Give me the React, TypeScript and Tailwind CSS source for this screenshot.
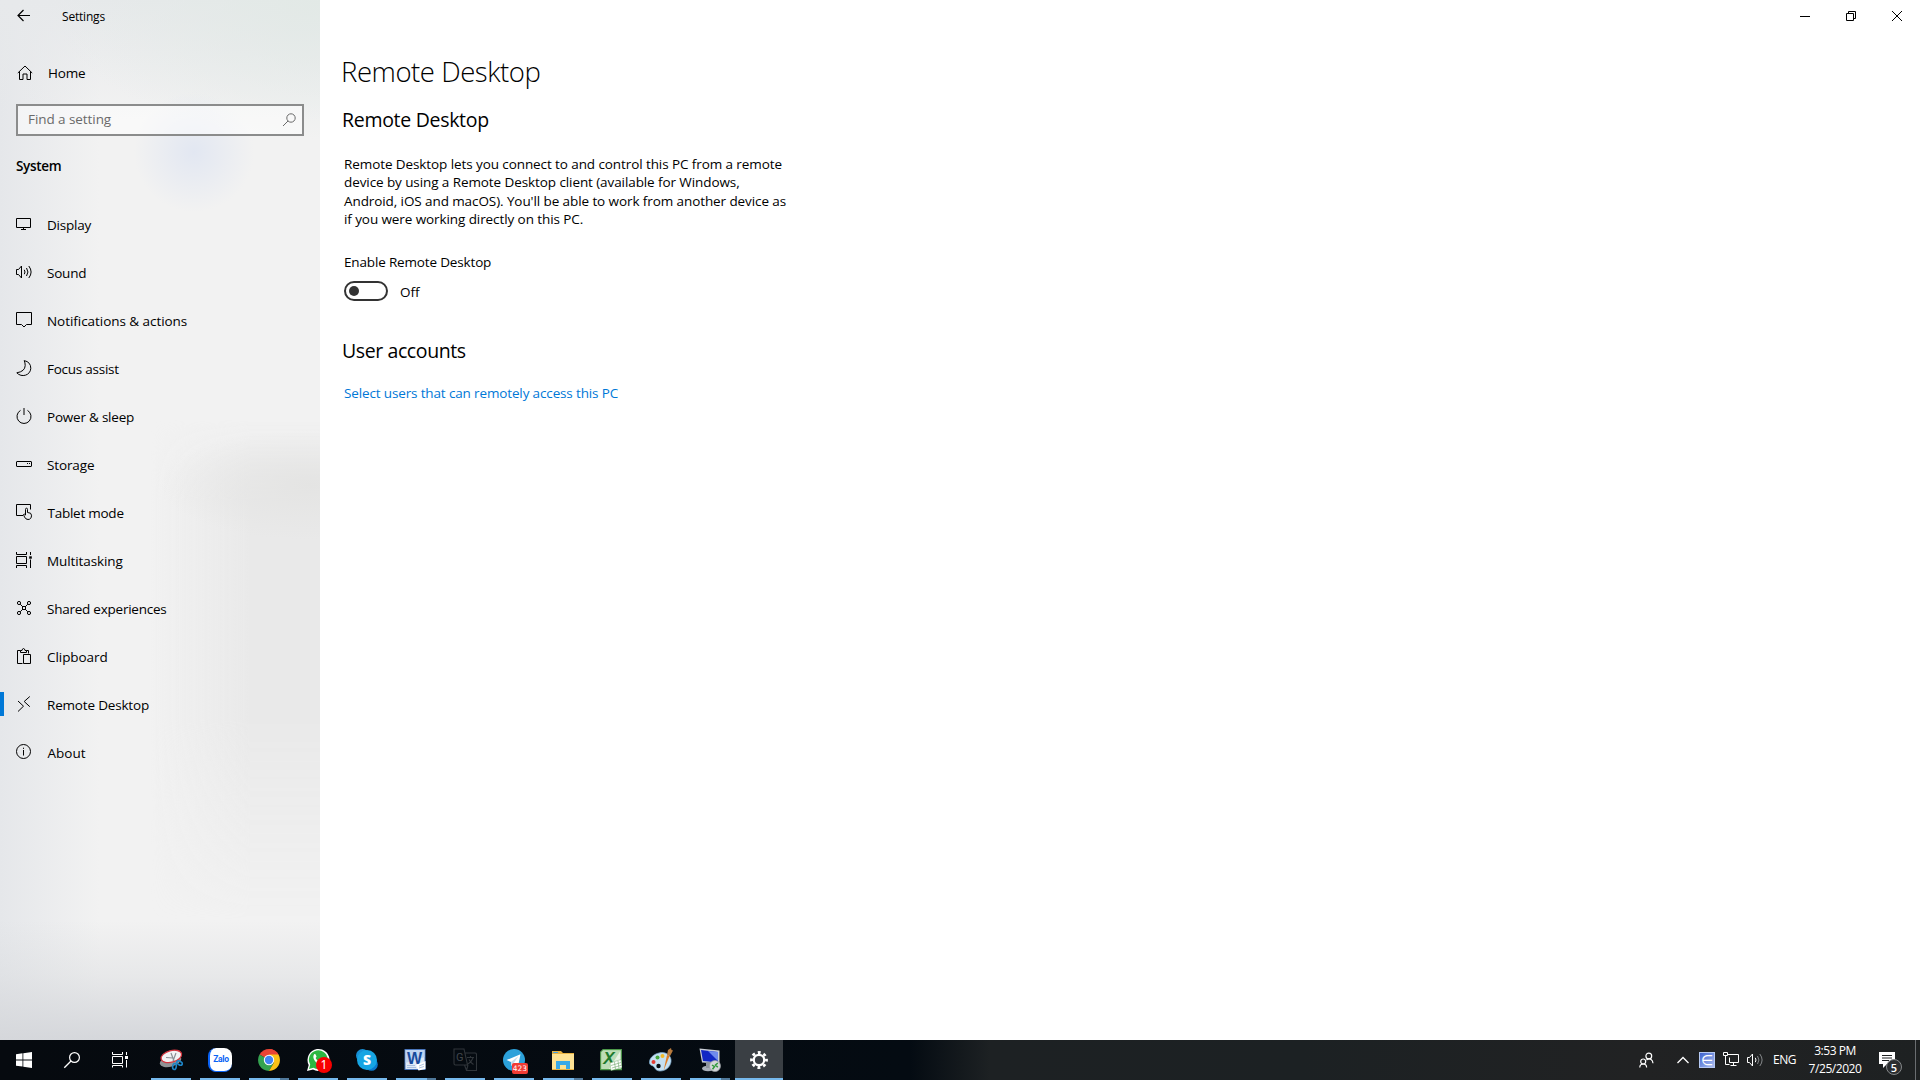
import React from "react";

type IconProps = { children: React.ReactNode; size?: number; className?: string };

const Glyph = ({ children, size = 16, className = "" }: IconProps) => (
  <svg
    width={size}
    height={size}
    viewBox={`0 0 ${size} ${size}`}
    fill="none"
    stroke="currentColor"
    strokeWidth="1"
    className={`shrink-0 overflow-visible ${className}`}
  >
    {children}
  </svg>
);

const navItems = [
  {
    label: "Display",
    track: "tracking-[-0.22px]",
    icon: <path d="M.5 2.5h14v9H.5zM7.5 11.5v2M5 13.5h5" />,
  },
  {
    label: "Sound",
    track: "tracking-[-0.2px]",
    icon: <path d="M.5 5.5h2l3-3.500v12l-3-3.500h-2zM8.300 5.800q1.400 2.200 0 4.400M10.500 4q2.900 4 0 8M12.800 2q4.600 6 0 12" />,
  },
  {
    label: "Notifications & actions",
    track: "tracking-[-0.05px]",
    icon: <path d="M.5.5h15v12h-5l-2.500 2.500-2.500-2.500h-5z" />,
  },
  {
    label: "Focus assist",
    track: "tracking-[-0.25px]",
    icon: <path d="M8.200.6Q14.800 2 14.800 8.300C14.500 15.500 5.500 18 .8 12.800Q9 11.500 9.200 5.500Q9.200 2.800 8.200.6z" />,
  },
  {
    label: "Power & sleep",
    track: "tracking-[-0.22px]",
    icon: <path d="M8 0v7M4.500 2.400a7 7 0 1 0 7 0" />,
  },
  {
    label: "Storage",
    track: "tracking-[-0.12px]",
    icon: (
      <>
        <rect x=".5" y="5.500" width="15" height="5" rx=".5" />
        <path d="M11 7.500h1M13 7.500h1" />
      </>
    ),
  },
  {
    label: "Tablet mode",
    track: "tracking-[-0.25px] pl-[0.5px]",
    icon: (
      <>
        <path d="M7 11.500H.5V.5h14v5" />
        <path d="M9.500 11V5.500q0-1.300 1-1.300t1 1.300V8.500q4 0 4 2.700 0 4.300-3.500 4.300-2.300 0-3.500-2.500L7.500 10.500q.8-1 2 .5" />
      </>
    ),
  },
  {
    label: "Multitasking",
    track: "tracking-[-0.1px]",
    icon: (
      <>
        <path d="M.5 0v2.500h10V0M.5 4.500h10v7H.5zM.5 16v-2.500h10V16M14.500 0v3M14.500 7.500V16" />
        <path d="M13.200 5.500h2.600" strokeWidth="2.400" />
      </>
    ),
  },
  {
    label: "Shared experiences",
    track: "tracking-[-0.24px]",
    icon: (
      <>
        <circle cx="3" cy="3" r="1.600" />
        <circle cx="13" cy="3" r="1.600" />
        <circle cx="3" cy="13" r="1.600" />
        <circle cx="13" cy="13" r="1.600" />
        <rect x="6.500" y="6.500" width="3" height="3" />
        <path d="M4.200 4.200l2.300 2.300M11.800 4.200L9.500 6.500M4.200 11.800l2.300-2.300M11.800 11.800L9.500 9.500" />
      </>
    ),
  },
  {
    label: "Clipboard",
    track: "tracking-[-0.06px]",
    icon: <path d="M6.500 15.500h-5v-13h3v2h6v-2h2v3M4.500 2.500h1.500q.3-2 1.500-2t1.500 2h1.500M7.500 6.500h7v9h-7z" />,
  },
  {
    label: "Remote Desktop",
    track: "tracking-[-0.18px]",
    icon: <path d="M2 5l5.500 5.200L2 15.500M13.800.5L8.200 5.500l5.600 5.200" />,
  },
  {
    label: "About",
    track: "pl-[0.5px]",
    icon: (
      <>
        <circle cx="7.500" cy="7.500" r="7" />
        <path d="M7.500 6v5.500M7.500 3.700v1.200" />
      </>
    ),
  },
];

const Sidebar = () => (
  <aside className="relative w-80 shrink-0 overflow-hidden bg-[#f2f2f2]">
    {/* acrylic tint */}
    <div className="absolute inset-0 bg-[radial-gradient(circle_60px_at_194px_152px,#e2e7f2_0%,#e2e7f200_100%),radial-gradient(ellipse_280px_140px_at_330px_0px,#e2e9e6_0%,#e2e9e600_100%),linear-gradient(to_bottom,#e7e9eb_0px,#e7e9eb00_120px),linear-gradient(to_bottom,#d8dadd00_920px,#d8dadd66_975px,#d5d7db_1040px),linear-gradient(to_right,#e5e7ea_0px,#e5e7ea00_100px)]" />
    <div className="absolute right-0 top-[420px] h-[500px] w-[170px] bg-[linear-gradient(to_right,#e9e9e900,#e9e9e9_100px)] [mask-image:linear-gradient(to_bottom,transparent,black_80px,black_60%,transparent)]" />
    <div className="absolute inset-0 bg-[radial-gradient(ellipse_150px_55px_at_310px_485px,#e4e4e3_0%,#e4e4e300_100%)]" />
    <div className="relative flex h-full flex-col">
      <div className="flex h-8 items-center pl-4">
        <Glyph>
          <path d="M2 7.500h12M7.500 2L2 7.500 7.500 13" strokeWidth="1.200" />
        </Glyph>
        <span className="ml-[30px] pt-[2px] text-[12px] leading-4 tracking-[-0.2px]">Settings</span>
      </div>
      <div className="mt-[17px] flex h-12 items-center pl-[17px]">
        <Glyph>
          <path d="M.8 8L8 1l7.200 7M2.500 6.500v8h3.500V9h4v5.500h3.500v-8" />
        </Glyph>
        <span className="ml-[15px] tracking-[-0.2px]">Home</span>
      </div>
      <div className="ml-4 mt-[7px] flex h-8 w-[288px] items-center justify-between border-2 border-[#8b8c8c] bg-white/50 pl-[10px] pr-[6px] text-[#6a6a6a]">
        <span className="-translate-y-px tracking-[-0.07px]">Find a setting</span>
        <Glyph size={14}>
          <circle cx="9" cy="5" r="4.200" />
          <path d="M6 8L1 13" />
        </Glyph>
      </div>
      <div className="ml-4 mt-5 font-semibold leading-5 tracking-[-0.3px]">System</div>
      <nav className="mt-[25px]">
        {navItems.map((item) => (
          <div key={item.label} className="flex h-12 items-center">
            <span className={`h-6 w-1 ${item.label === "Remote Desktop" ? "-translate-y-px bg-[#0078d7]" : ""}`} />
            <Glyph className="ml-3 -translate-y-px">{item.icon}</Glyph>
            <span className={`ml-[15px] ${item.track}`}>{item.label}</span>
          </div>
        ))}
      </nav>
    </div>
  </aside>
);

const Content = () => (
  <main className="flex flex-1 flex-col bg-white">
    <div className="flex h-8 justify-end">
      <div className="flex w-[46px] items-center justify-center">
        <Glyph size={10}>
          <path d="M0 5.500h10" />
        </Glyph>
      </div>
      <div className="flex w-[46px] items-center justify-center">
        <Glyph size={10}>
          <path d="M.5 2.500h7v7h-7zM2.500 2.500v-2h7v7h-2" />
        </Glyph>
      </div>
      <div className="flex w-[46px] items-center justify-center">
        <Glyph size={10}>
          <path d="M0 0l10 10M10 0L0 10" />
        </Glyph>
      </div>
    </div>
    <div className="pl-[22px]">
      <h1 className="-ml-px mt-5 text-[27.5px] font-light leading-10 tracking-[-0.45px]">Remote Desktop</h1>
      <h2 className="mt-[14px] text-[19.5px] leading-7 tracking-[-0.3px]">Remote Desktop</h2>
      <div className="pl-[2px]">
        <p className="mt-[21px] leading-[18.4px] tracking-[-0.09px]">
          Remote Desktop lets you connect to and control this PC from a remote
          <br />
          device by using a Remote Desktop client (available for Windows,
          <br />
          Android, iOS and macOS). You'll be able to work from another device as
          <br />
          if you were working directly on this PC.
        </p>
        <p className="mt-[23.4px] leading-5 tracking-[-0.16px]">Enable Remote Desktop</p>
        <div className="mt-[9px] flex items-center">
          <div className="flex h-5 w-11 items-center rounded-full border-2 border-[#333] pl-[3px]">
            <span className="size-[10px] rounded-full bg-[#333]" />
          </div>
          <span className="ml-3 translate-y-px leading-5">Off</span>
        </div>
      </div>
      <h2 className="mt-9 text-[19.5px] leading-7 tracking-[-0.4px]">User accounts</h2>
      <a className="ml-[2px] mt-[18px] block leading-5 tracking-[-0.14px] text-[#0078d7]">
        Select users that can remotely access this PC
      </a>
    </div>
  </main>
);

const SnippingIcon = () => (
  <svg width="24" height="24" viewBox="0 0 24 24">
    <ellipse cx="11.500" cy="13" rx="11" ry="5.500" transform="rotate(-15 12 13)" fill="#8f9295" />
    <ellipse cx="12.500" cy="8.500" rx="10.500" ry="5.800" transform="rotate(-15 12 9)" fill="#f2f3f4" stroke="#d3363f" strokeWidth="1.300" />
    <path d="M7 9.500l7 .5M12 5l3 8M17 5l-3 8" stroke="#8a8f94" strokeWidth="1.200" fill="none" />
    <ellipse cx="15.500" cy="18.500" rx="1.800" ry="3" transform="rotate(10 15.500 18.500)" fill="none" stroke="#1d84c6" strokeWidth="1.600" />
    <ellipse cx="20.500" cy="15" rx="3" ry="1.800" transform="rotate(30 20.500 15)" fill="none" stroke="#1d84c6" strokeWidth="1.600" />
  </svg>
);

const ZaloIcon = () => (
  <div className="relative flex size-6 items-center justify-center rounded-[8px] border-b border-l-2 border-[#0a63f5] bg-white">
    <span className="font-['Roboto'] text-[8.5px] font-bold leading-none tracking-[-0.3px] text-[#0a63f5]">Zalo</span>
  </div>
);

const ChromeIcon = () => (
  <svg width="22" height="22" viewBox="0 0 22 22">
    <path d="M11 11L1.500 5.500A11 11 0 0 1 20.500 5.500z" fill="#e94335" />
    <path d="M11 0A11 11 0 0 1 20.500 5.500H11z" fill="#e94335" />
    <path d="M1.500 5.500A11 11 0 0 0 11 22l4.800-8.300L11 11z" fill="#34a350" />
    <path d="M20.500 5.500A11 11 0 0 1 11 22l4.800-8.200L11 5.500z" fill="#fbc116" />
    <circle cx="11" cy="11" r="5.200" fill="#fff" />
    <circle cx="11" cy="11" r="4.200" fill="#4285f4" />
  </svg>
);

const WhatsAppIcon = () => (
  <div className="relative">
    <svg width="24" height="24" viewBox="0 0 24 24">
      <path d="M1 23l1.700-6A11 11 0 1 1 7 21.500z" fill="#fff" />
      <path d="M3 21l1.200-4.500A9.400 9.400 0 1 1 7.500 19.800z" fill="#2cb742" />
      <path d="M8 6.500c.8-.8 1.500-.5 1.800.3l.7 1.700c.1.500-.7 1-.9 1.500 1 2 2.200 3 4 3.800.7-.2 1-1.400 1.600-1.200l2 1c.6.400 0 3-2.700 3C10.500 16.400 5.500 10 8 6.500z" fill="#fff" />
    </svg>
    <span className="absolute left-[10px] top-[9px] flex size-4 items-center justify-center rounded-full bg-[#f80000] font-['Noto_Sans'] text-[12px] leading-none text-white">1</span>
  </div>
);

const SkypeIcon = () => (
  <svg width="24" height="24" viewBox="0 0 24 24">
    <circle cx="7.500" cy="7.500" r="6.500" fill="#1790d6" />
    <circle cx="16.500" cy="16.500" r="6.300" fill="#0a78cc" />
    <circle cx="12" cy="12" r="10" fill="#16a5e3" />
    <text x="12" y="17" textAnchor="middle" fontSize="14" fontWeight="800" fill="#fff" className="font-['Open_Sans']">S</text>
  </svg>
);

const WordIcon = () => (
  <svg width="22" height="22" viewBox="0 0 22 22" className="-translate-x-px">
    <rect x="1" y=".5" width="20" height="20" fill="#dfe9f7" stroke="#4a76bb" />
    <path d="M1 1h20v7L1 14z" fill="#a9c6ec" opacity=".6" />
    <text x="10.500" y="14.500" textAnchor="middle" fontSize="16" fontWeight="700" fill="#174a9c" className="font-['Liberation_Sans']">W</text>
    <path d="M12 16l9.500-4v8l-7 1.500z" fill="#fff" />
    <path d="M3 16.500h8M3 18.500h9M15 17l5-2M15 19l5-1.500" stroke="#9bb5d8" strokeWidth=".8" />
  </svg>
);

const TranslateIcon = () => (
  <svg width="24" height="24" viewBox="0 0 24 24" fill="none" stroke="#30353a" strokeWidth="1.100">
    <path d="M1 1h10l3.500 16H2.500Q1 17 1 15.500zM12 5h10q1.500 0 1.500 1.500v16H13.500l-2-5.500M13.500 22.500l1.500-5.500M14 9.500h7M17.500 8v2M20 10q-1.500 4-5 6M16 11.500q1.500 3 4.500 5" />
    <text x="6.800" y="13" textAnchor="middle" fontSize="11" fill="#42474c" stroke="none" className="font-['Roboto']">G</text>
  </svg>
);

const TelegramIcon = () => (
  <div className="relative">
    <svg width="22" height="22" viewBox="0 0 22 22">
      <circle cx="11" cy="11" r="11" fill="#2ca1da" />
      <path d="M3.500 11L17.500 5.200 15 17.500l-4.500-3-2.500 2.300v-3.800z" fill="#fff" />
      <path d="M8 13l7.500-6-5 7.500-2.500 2.300z" fill="#c5dcec" />
    </svg>
    <span className="absolute left-[9px] top-[14px] flex h-[11px] w-4 items-center justify-center rounded-[2px] bg-[#f23c34] font-['DejaVu_Sans'] text-[7.5px] leading-none text-white">423</span>
  </div>
);

const ExplorerIcon = () => (
  <svg width="22" height="19" viewBox="0 0 22 19">
    <path d="M0 0h9l2 2h11v17H0z" fill="#e9b342" />
    <path d="M0 3h22v15H0z" fill="#fde294" />
    <path d="M1 1h5v1H1z" fill="#4aa3e0" />
    <path d="M4 18v-8h14v8h-4v-4H8v4z" fill="#38a9e8" />
  </svg>
);

const ExcelIcon = () => (
  <svg width="22" height="22" viewBox="0 0 22 22" className="-translate-x-px">
    <path d="M3 .7h18.300v20H.7V3z" fill="#e8f2e6" stroke="#4d9a4a" strokeWidth="1.200" />
    <path d="M3 1h18L9 20H1V3z" fill="#9fcf98" opacity=".6" />
    <text x="9" y="14.500" textAnchor="middle" fontSize="17" fontWeight="700" fontStyle="italic" fill="#1d7a2e" className="font-['Liberation_Sans']">X</text>
    <path d="M10 14l11-3.500 1 8-11 3z" fill="#fff" stroke="#7fb17b" strokeWidth=".5" />
    <path d="M11 16.500l10-3M12 19l10-3M14.500 13l1 7.500M18 12l1 7.500" stroke="#6fa56c" strokeWidth=".6" />
  </svg>
);

const PaintIcon = () => (
  <svg width="24" height="24" viewBox="0 0 24 24">
    <path d="M10 5C17 3 23 8 22 14c-1 5-5 9-11 9-4 0-5-3-6-4-1-2-4-1-4.500-4C0 10 5 6 10 5z" fill="#c5e0f2" stroke="#7ba9cd" strokeWidth=".7" />
    <circle cx="4.500" cy="14" r="2" fill="#e33d34" />
    <circle cx="8.500" cy="9.500" r="2" fill="#44a83d" />
    <circle cx="13.500" cy="8" r="2" fill="#f2b927" />
    <circle cx="9.500" cy="18" r="2.200" fill="#080d12" />
    <path d="M14.500 23L18 7l2.500 1z" fill="#e07d23" />
    <path d="M18 7l1-5 3-2 .5 2 1.500.500L21 8z" fill="#b87a3d" />
  </svg>
);

const RdpIcon = () => (
  <svg width="24" height="24" viewBox="0 0 24 24" className="-translate-x-px">
    <path d="M2.500.5L22.500 2.500v13L5 14.500z" fill="#c9ced6" />
    <path d="M4 2l17 2v10.500L6 13z" fill="#1128c4" />
    <path d="M11 3l10 1v9z" fill="#6f8bee" />
    <ellipse cx="11" cy="20.500" rx="6" ry="2.800" fill="#a9afb8" />
    <path d="M9 14h5v6H9z" fill="#8d939d" />
    <circle cx="18" cy="18" r="5.500" fill="#d3d6d8" stroke="#9a9ea2" strokeWidth=".7" />
    <path d="M15 17l2.500 1.700-2 2.600M20.800 15l-2.300 2 2.300 2.200" stroke="#2f9a3a" strokeWidth="1.500" fill="none" />
  </svg>
);

const GearIcon = () => (
  <svg width="18" height="18" viewBox="0 0 18 18" fill="none" stroke="#fff">
    <circle cx="9" cy="9" r="5.200" strokeWidth="2.200" />
    <circle cx="9" cy="9" r="7.500" strokeWidth="2.800" strokeDasharray="2.900 2.990" strokeDashoffset="1.450" />
  </svg>
);

const apps = [
  { id: "snip", icon: <SnippingIcon /> },
  { id: "zalo", icon: <ZaloIcon /> },
  { id: "chrome", icon: <ChromeIcon />, stacked: true },
  { id: "whatsapp", icon: <WhatsAppIcon /> },
  { id: "skype", icon: <SkypeIcon /> },
  { id: "word", icon: <WordIcon />, stacked: true },
  { id: "translate", icon: <TranslateIcon /> },
  { id: "telegram", icon: <TelegramIcon /> },
  { id: "explorer", icon: <ExplorerIcon />, stacked: true },
  { id: "excel", icon: <ExcelIcon /> },
  { id: "paint", icon: <PaintIcon /> },
  { id: "rdp", icon: <RdpIcon />, stacked: true },
  { id: "settings", icon: <GearIcon />, active: true },
];

const Taskbar = () => (
  <footer className="flex h-10 bg-[linear-gradient(to_right,#060a0f_0px,#040b12_910px,#1d2123_990px,#1c2123_1300px,#212223_1640px,#1e2122_1920px)] text-white">
    <div className="flex w-12 items-center justify-center">
      <svg width="16" height="16" viewBox="0 0 16 16" fill="#fff">
        <path d="M0 2.200L6.500 1.300v6.200H0zM7.300 1.200L16 0v7.500H7.300zM0 8.400h6.500v6.200L0 13.700zM7.300 8.400H16V16l-8.700-1.200z" />
      </svg>
    </div>
    <div className="flex w-12 items-center justify-center">
      <Glyph>
        <circle cx="10.500" cy="5.500" r="4.900" strokeWidth="1.200" />
        <path d="M7 9L.3 15.700" strokeWidth="1.300" />
      </Glyph>
    </div>
    <div className="mr-[3px] flex w-12 items-center justify-center">
      <Glyph>
        <path d="M.5 0v2.500h10V0M.5 4.500h10v7H.5zM.5 15.500v-2h10v2M14.500 0v3M14.500 8v7.500" />
        <path d="M13 5.500h3" strokeWidth="3" />
      </Glyph>
    </div>
    <div className="flex gap-px">
      {apps.map((app) => (
        <div key={app.id} className={`flex w-12 flex-col items-center ${app.active ? "bg-[#3a3f44]" : ""}`}>
          <div className="flex h-[38px] items-center justify-center pt-[2px]">{app.icon}</div>
          <div className={`flex h-[2px] ${app.active ? "w-12" : "w-10"}`}>
            <span className="flex-1 bg-[#76b9ed]" />
            {app.stacked && <span className="w-[9px] bg-[#50799b]" />}
          </div>
        </div>
      ))}
    </div>
    <div className="ml-auto flex items-center">
      {/* people */}
      <Glyph size={15}>
        <circle cx="9.800" cy="3" r="2.900" strokeWidth="1.200" />
        <circle cx="4.200" cy="8.500" r="2.500" strokeWidth="1.200" />
        <path d="M.8 14.500q0-3.500 3.400-3.500t3.400 3.500M7.500 7q2.300-1.800 4.600-.6 1.700 1.200 1.900 3.800" strokeWidth="1.200" />
      </Glyph>
      <Glyph size={12} className="ml-[23px]">
        <path d="M.5 9L6 3.500 11.500 9" strokeWidth="1.300" />
      </Glyph>
      <div className="ml-[10px] flex size-4 items-center justify-center border border-[#b5c8f2] bg-[linear-gradient(to_bottom_right,#3f63cf,#a9bdf0)] font-['DejaVu_Sans'] text-[14px] leading-none">
        ∈
      </div>
      <Glyph className="ml-2">
        <path d="M.5.5h4v3h-4zM2.500 3.500v9h4M5 2.500h10.500v8h-9v-5M10.500 10.500v3M7.500 13.500h6" />
      </Glyph>
      <Glyph className="ml-2">
        <path d="M.5 5.500h2l3-3.500v12l-3-3.500h-2zM8.300 5.800q1.400 2.200 0 4.400" />
        <path d="M10.500 4q2.900 4 0 8M12.800 2q4.600 6 0 12" stroke="#85888a" />
      </Glyph>
      <span className="ml-[10px] w-6 text-[12px] tracking-[-0.5px]">ENG</span>
      <div className="ml-[10px] w-[56px] whitespace-nowrap text-center text-[12px] leading-[18px] tracking-[-0.45px]">
        <div>3:53 PM</div>
        <div>7/25/2020</div>
      </div>
      <div className="relative ml-4 mr-[20px] h-4">
        <svg width="16" height="16" viewBox="0 0 16 16">
          <path d="M0 0h16v12h-8l-4 4v-4H0z" fill="#fff" />
          <path d="M3 3.500h10M3 6h10M3 8.500h7" stroke="#1e2122" strokeWidth="1" />
        </svg>
        <span className="absolute left-[7px] top-[7px] flex size-4 items-center justify-center rounded-full border border-[#85888a] bg-[#2b2d2f] text-[11px] font-semibold leading-none">5</span>
      </div>
      <div className="h-10 w-[5px] border-l border-[#6a6d70]" />
    </div>
  </footer>
);

const App = () => {
  return (
    <div className="flex h-[1080px] w-[1920px] flex-col overflow-hidden font-['Open_Sans','Noto_Sans',sans-serif] text-[13.5px] leading-5 text-black">
      <div className="flex min-h-0 flex-1">
        <Sidebar />
        <Content />
      </div>
      <Taskbar />
    </div>
  );
};

export default App;
